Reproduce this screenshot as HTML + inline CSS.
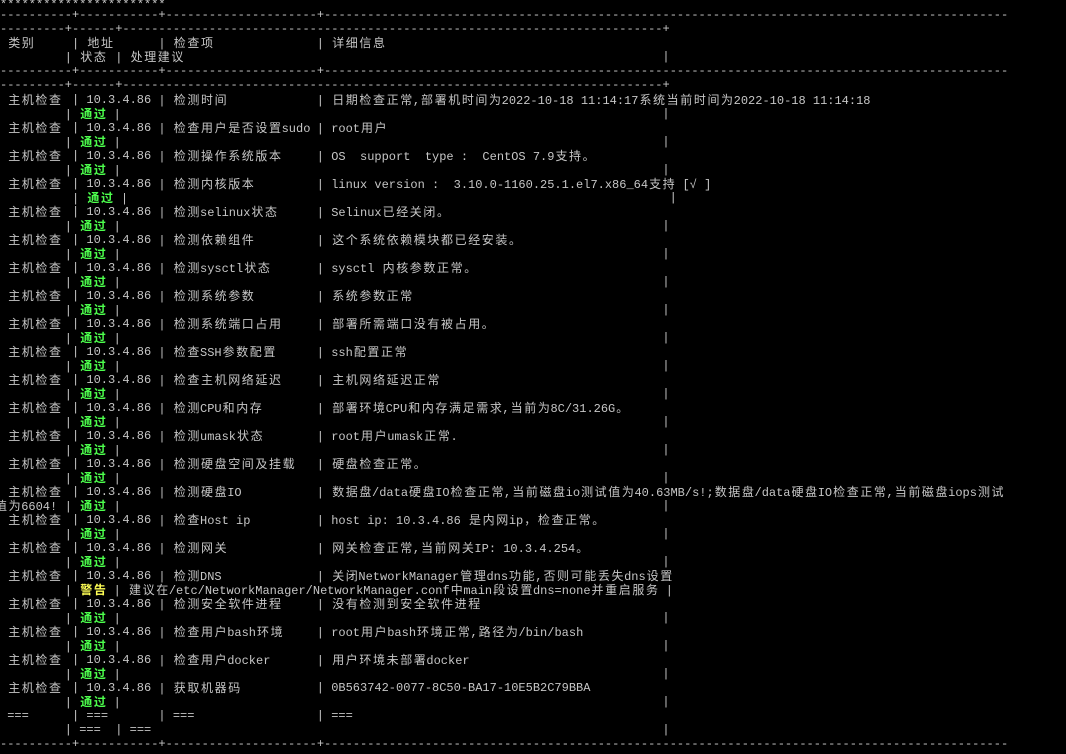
<!DOCTYPE html>
<html><head><meta charset="utf-8"><style>
html,body{margin:0;padding:0;background:#000;width:1066px;height:754px;overflow:hidden}
body{position:relative;font-family:"Liberation Mono","Noto Sans CJK SC",monospace;font-size:12px;color:#c6c6c6}
.l{position:absolute;left:0;white-space:pre;height:14px;line-height:14px}
.l span{position:absolute;top:0;white-space:pre}
i{font-style:normal;letter-spacing:1.6px;font-family:"Noto Sans CJK SC","WenQuanYi Zen Hei",sans-serif;position:relative;left:1px}
.g{color:#4dff4d;font-weight:bold}
.y{color:#ffff55;font-weight:bold}
.a{left:72px}
.b{left:158.4px}
.d{left:316.8px}
.p{left:662.4px}
</style></head><body>
<div class="l" style="top:-2px">***********************</div>
<div class="l" style="top:8px">----------+-----------+---------------------+-----------------------------------------------------------------------------------------------</div>
<div class="l" style="top:22px">---------+------+---------------------------------------------------------------------------+</div>
<div class="l" style="top:36px"> <i>类别</i><span class="a">| <i>地址</i></span><span class="b">| <i>检查项</i></span><span class="d">| <i>详细信息</i></span></div>
<div class="l" style="top:50px">         | <i>状态</i><span style="left:115.2px">| <i>处理建议</i></span><span class="p">|</span></div>
<div class="l" style="top:64px">----------+-----------+---------------------+-----------------------------------------------------------------------------------------------</div>
<div class="l" style="top:78px">---------+------+---------------------------------------------------------------------------+</div>

<div class="l" style="top:93px"> <i>主机检查</i><span class="a">| 10.3.4.86</span><span class="b">| <i>检测时间</i></span><span class="d">| <i>日期检查正常</i>,<i>部署机时间为</i>2022-10-18 11:14:17<i>系统当前时间为</i>2022-10-18 11:14:18</span></div>
<div class="l" style="top:107px">         | <i class="g">通过</i> |<span class="p">|</span></div>
<div class="l" style="top:121px"> <i>主机检查</i><span class="a">| 10.3.4.86</span><span class="b">| <i>检查用户是否设置</i>sudo</span><span class="d">| root<i>用户</i></span></div>
<div class="l" style="top:135px">         | <i class="g">通过</i> |<span class="p">|</span></div>
<div class="l" style="top:149px"> <i>主机检查</i><span class="a">| 10.3.4.86</span><span class="b">| <i>检测操作系统版本</i></span><span class="d">| OS  support  type :  CentOS 7.9<i>支持。</i></span></div>
<div class="l" style="top:163px">         | <i class="g">通过</i> |<span class="p">|</span></div>
<div class="l" style="top:177px"> <i>主机检查</i><span class="a">| 10.3.4.86</span><span class="b">| <i>检测内核版本</i></span><span class="d">| linux version :  3.10.0-1160.25.1.el7.x86_64<i>支持</i> [√ ]</span></div>
<div class="l" style="top:191px">          | <i class="g">通过</i> |<span class="p" style="left:669.6px">|</span></div>
<div class="l" style="top:205px"> <i>主机检查</i><span class="a">| 10.3.4.86</span><span class="b">| <i>检测</i>selinux<i>状态</i></span><span class="d">| Selinux<i>已经关闭。</i></span></div>
<div class="l" style="top:219px">         | <i class="g">通过</i> |<span class="p">|</span></div>
<div class="l" style="top:233px"> <i>主机检查</i><span class="a">| 10.3.4.86</span><span class="b">| <i>检测依赖组件</i></span><span class="d">| <i>这个系统依赖模块都已经安装。</i></span></div>
<div class="l" style="top:247px">         | <i class="g">通过</i> |<span class="p">|</span></div>
<div class="l" style="top:261px"> <i>主机检查</i><span class="a">| 10.3.4.86</span><span class="b">| <i>检测</i>sysctl<i>状态</i></span><span class="d">| sysctl <i>内核参数正常。</i></span></div>
<div class="l" style="top:275px">         | <i class="g">通过</i> |<span class="p">|</span></div>
<div class="l" style="top:289px"> <i>主机检查</i><span class="a">| 10.3.4.86</span><span class="b">| <i>检测系统参数</i></span><span class="d">| <i>系统参数正常</i></span></div>
<div class="l" style="top:303px">         | <i class="g">通过</i> |<span class="p">|</span></div>
<div class="l" style="top:317px"> <i>主机检查</i><span class="a">| 10.3.4.86</span><span class="b">| <i>检测系统端口占用</i></span><span class="d">| <i>部署所需端口没有被占用。</i></span></div>
<div class="l" style="top:331px">         | <i class="g">通过</i> |<span class="p">|</span></div>
<div class="l" style="top:345px"> <i>主机检查</i><span class="a">| 10.3.4.86</span><span class="b">| <i>检查</i>SSH<i>参数配置</i></span><span class="d">| ssh<i>配置正常</i></span></div>
<div class="l" style="top:359px">         | <i class="g">通过</i> |<span class="p">|</span></div>
<div class="l" style="top:373px"> <i>主机检查</i><span class="a">| 10.3.4.86</span><span class="b">| <i>检查主机网络延迟</i></span><span class="d">| <i>主机网络延迟正常</i></span></div>
<div class="l" style="top:387px">         | <i class="g">通过</i> |<span class="p">|</span></div>
<div class="l" style="top:401px"> <i>主机检查</i><span class="a">| 10.3.4.86</span><span class="b">| <i>检测</i>CPU<i>和内存</i></span><span class="d">| <i>部署环境</i>CPU<i>和内存满足需求</i>,<i>当前为</i>8C/31.26G<i>。</i></span></div>
<div class="l" style="top:415px">         | <i class="g">通过</i> |<span class="p">|</span></div>
<div class="l" style="top:429px"> <i>主机检查</i><span class="a">| 10.3.4.86</span><span class="b">| <i>检测</i>umask<i>状态</i></span><span class="d">| root<i>用户</i>umask<i>正常</i>.</span></div>
<div class="l" style="top:443px">         | <i class="g">通过</i> |<span class="p">|</span></div>
<div class="l" style="top:457px"> <i>主机检查</i><span class="a">| 10.3.4.86</span><span class="b">| <i>检测硬盘空间及挂载</i></span><span class="d">| <i>硬盘检查正常。</i></span></div>
<div class="l" style="top:471px">         | <i class="g">通过</i> |<span class="p">|</span></div>
<div class="l" style="top:485px"> <i>主机检查</i><span class="a">| 10.3.4.86</span><span class="b">| <i>检测硬盘</i>IO</span><span class="d">| <i>数据盘</i>/data<i>硬盘</i>IO<i>检查正常</i>,<i>当前磁盘</i>io<i>测试值为</i>40.63MB/s!;<i>数据盘</i>/data<i>硬盘</i>IO<i>检查正常</i>,<i>当前磁盘</i>iops<i>测试</i></span></div>
<div class="l" style="top:499px">         | <i class="g">通过</i> |<span class="p">|</span><span style="left:-6px"><i>值为</i>6604!</span></div>
<div class="l" style="top:513px"> <i>主机检查</i><span class="a">| 10.3.4.86</span><span class="b">| <i>检查</i>Host ip</span><span class="d">| host ip: 10.3.4.86 <i>是内网</i>ip<i>，检查正常。</i></span></div>
<div class="l" style="top:527px">         | <i class="g">通过</i> |<span class="p">|</span></div>
<div class="l" style="top:541px"> <i>主机检查</i><span class="a">| 10.3.4.86</span><span class="b">| <i>检测网关</i></span><span class="d">| <i>网关检查正常</i>,<i>当前网关</i>IP: 10.3.4.254<i>。</i></span></div>
<div class="l" style="top:555px">         | <i class="g">通过</i> |<span class="p">|</span></div>
<div class="l" style="top:569px"> <i>主机检查</i><span class="a">| 10.3.4.86</span><span class="b">| <i>检测</i>DNS</span><span class="d">| <i>关闭</i>NetworkManager<i>管理</i>dns<i>功能</i>,<i>否则可能丢失</i>dns<i>设置</i></span></div>
<div class="l" style="top:583px">         | <i class="y">警告</i> | <i>建议在</i>/etc/NetworkManager/NetworkManager.conf<i>中</i>main<i>段设置</i>dns=none<i>并重启服务</i> |</div>
<div class="l" style="top:597px"> <i>主机检查</i><span class="a">| 10.3.4.86</span><span class="b">| <i>检测安全软件进程</i></span><span class="d">| <i>没有检测到安全软件进程</i></span></div>
<div class="l" style="top:611px">         | <i class="g">通过</i> |<span class="p">|</span></div>
<div class="l" style="top:625px"> <i>主机检查</i><span class="a">| 10.3.4.86</span><span class="b">| <i>检查用户</i>bash<i>环境</i></span><span class="d">| root<i>用户</i>bash<i>环境正常</i>,<i>路径为</i>/bin/bash</span></div>
<div class="l" style="top:639px">         | <i class="g">通过</i> |<span class="p">|</span></div>
<div class="l" style="top:653px"> <i>主机检查</i><span class="a">| 10.3.4.86</span><span class="b">| <i>检查用户</i>docker</span><span class="d">| <i>用户环境未部署</i>docker</span></div>
<div class="l" style="top:667px">         | <i class="g">通过</i> |<span class="p">|</span></div>
<div class="l" style="top:681px"> <i>主机检查</i><span class="a">| 10.3.4.86</span><span class="b">| <i>获取机器码</i></span><span class="d">| 0B563742-0077-8C50-BA17-10E5B2C79BBA</span></div>
<div class="l" style="top:695px">         | <i class="g">通过</i> |<span class="p">|</span></div>
<div class="l" style="top:709px"> ===      | ===       | ===<span class="d">| ===</span></div>
<div class="l" style="top:723px">         | ===  | ===<span class="p">|</span></div>
<div class="l" style="top:737px">----------+-----------+---------------------+-----------------------------------------------------------------------------------------------</div>
</body></html>
